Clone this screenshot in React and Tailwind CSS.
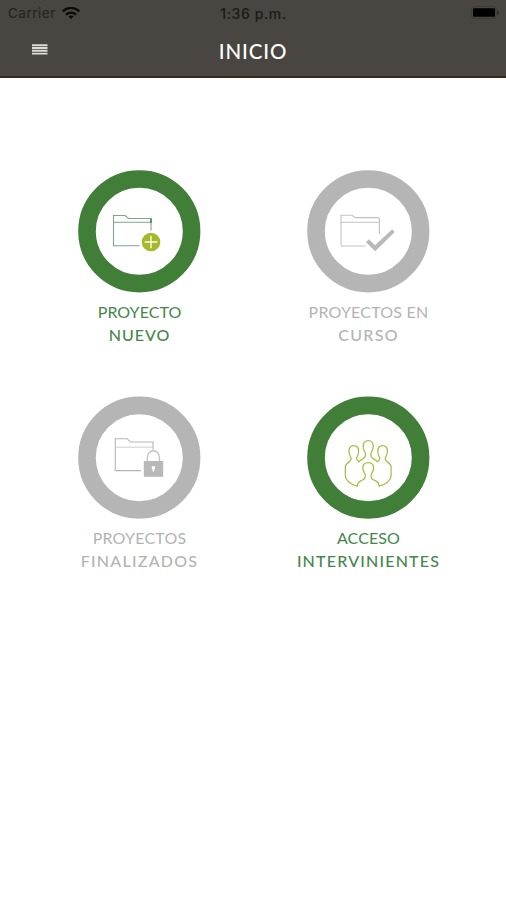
const GREEN = "#417f39";
const GRAY = "#b5b5b5";
const LIME = "#a6b92c";

function Ring({ color, cy = 61.3, children }) {
  return (
    <svg className="block h-[123px] w-[123px]" viewBox="0 0 123 123" fill="none">
      <circle cx="61.3" cy={cy} r="52.3" stroke={color} strokeWidth="17.6" />
      {children}
    </svg>
  );
}

function NewProjectIcon() {
  return (
    <Ring color={GREEN}>
      <path d="M61.5 75.8H35.5V45.5H47L50.5 48.5H73V60.5M35.5 52.3H73" stroke="#7fa58c" strokeWidth="1.1" />
      <path d="M73 48.5V53" stroke={GREEN} strokeWidth="1.4" />
      <circle cx="73" cy="72" r="9.3" fill={LIME} />
      <path d="M66.7 72H79.3M73 65.7V78.3" stroke="#fbfde8" strokeWidth="1.4" />
    </Ring>
  );
}

function OngoingIcon() {
  return (
    <Ring color={GRAY}>
      <path d="M58.5 76H35Q34 76 34 75V45.3H45L48 47.6H71Q72.4 47.6 72.4 49V64M34 52.3H72.4" stroke="#c2c2c2" strokeWidth="1.1" />
      <path d="M61.8 69.2L68 75.3L85.2 59.2L87.8 62L68.2 81.3L59 72.2Z" fill="#b9b9b9" />
    </Ring>
  );
}

function FinishedIcon() {
  return (
    <Ring color={GRAY} cy={61.7}>
      <path d="M63 74.6H37.3V42.7H49.3L52.3 46H75V53.5" stroke="#b5b5b5" strokeWidth="1.1" />
      <path d="M37.3 51.2H75" stroke="#d0d0d0" strokeWidth="1" />
      <path d="M69.3 66V61.5C69.3 52.5 81.4 52.5 81.4 61.5V66" stroke="#c2c2c2" strokeWidth="1.3" />
      <rect x="65.8" y="65" width="19.4" height="15.8" rx="0.6" fill="#b8b8b8" />
      <path d="M73.8 70.3H77V72.8L76.2 73.4V75.5H74.6V73.4L73.8 72.8Z" fill="#fff" />
    </Ring>
  );
}

function PeopleIcon() {
  return (
    <Ring color={GREEN} cy={61.7}>
      <path
        d="M50.3 90.2C45 89 38.3 85 38.3 79V71C38.3 66 44.2 66.8 44.2 62.8C44.2 60.5 42 59.5 42 55.5C42 51.8 43.7 49.7 46.8 49.7C49.9 49.7 51.6 51.8 51.6 55.5C51.6 59.5 49.6 60.5 49.6 62.5C49.6 64.3 50.8 64.6 52 65.8C54 62.8 58.6 63.4 58.6 58.5C58.6 56 56.2 55 56.2 50.6C56.2 46.8 58.1 44.7 61.2 44.7C64.3 44.7 66.2 46.8 66.2 50.6C66.2 55 63.8 56 63.8 58.5C63.8 63.4 68.4 62.8 70.4 65.8C71.6 64.6 72.8 64.3 72.8 62.5C72.8 60.5 70.8 59.5 70.8 55.5C70.8 51.8 72.5 49.7 75.6 49.7C78.7 49.7 80.4 51.8 80.4 55.5C80.4 59.5 78.2 60.5 78.2 62.8C78.2 66.8 84.1 66 84.1 71V79C84.1 85 77.4 89 72.1 90.2C72 86.5 70.5 85.8 68.5 84.8C66.5 83.8 64.3 83.5 64.2 81V78.5C64.2 77 66.6 76 66.6 72.3C66.6 68.6 64.6 66.5 61.2 66.5C57.8 66.5 55.8 68.6 55.8 72.3C55.8 76 58.2 77 58.2 78.5V81C58.1 83.5 55.9 83.8 53.9 84.8C51.9 85.8 50.4 86.5 50.3 90.2Z"
        stroke="#a9bd45"
        strokeWidth="1.25"
        strokeLinejoin="round"
      />
    </Ring>
  );
}

const items = [
  { icon: NewProjectIcon, first: "PROYECTO", second: "NUEVO", color: "text-[#45864a]", a: "tracking-[0.05px]", b: "tracking-[1px]" },
  { icon: OngoingIcon, first: "PROYECTOS EN", second: "CURSO", color: "text-[#b3b3b3]", a: "tracking-[0.2px]", b: "tracking-[1.3px]" },
  { icon: FinishedIcon, first: "PROYECTOS", second: "FINALIZADOS", color: "text-[#b3b3b3]", a: "tracking-[0.2px]", b: "tracking-[1.25px]" },
  { icon: PeopleIcon, first: "ACCESO", second: "INTERVINIENTES", color: "text-[#45864a]", a: "tracking-[0.1px]", b: "tracking-[1.2px]" },
];

function StatusBar() {
  return (
    <div className="grid h-[26px] grid-cols-3 items-center pl-2 pr-[7px] font-['Inter',sans-serif] text-[13px] text-[#1c1a17]">
      <div className="flex items-center gap-[6px]">
        <span className="text-[13.5px] tracking-[0.5px] text-[#25221f]">Carrier</span>
        <svg className="h-[13px] w-[18px]" viewBox="0 0 18 13" fill="none" stroke="#0c0b0a" strokeWidth="2.3">
          <path d="M0.8 4.4C5.5 -0.3 12.5 -0.3 17.2 4.4" />
          <path d="M4 7.6C6.8 4.9 11.2 4.9 14 7.6" />
          <path d="M9 12.1L6.4 9.5C7.9 8.2 10.1 8.2 11.6 9.5Z" fill="#0c0b0a" stroke="none" />
        </svg>
      </div>
      <span className="pt-[1px] text-center text-[14px] font-medium tracking-[0.6px] whitespace-nowrap">1:36 p.m.</span>
      <svg className="h-[14px] w-[28px] justify-self-end" viewBox="0 0 28 14">
        <rect x="0.5" y="0.5" width="24.5" height="12" rx="3" fill="none" stroke="#3f3b36" />
        <rect x="2" y="2.3" width="22" height="8.4" rx="1" fill="#000" />
        <path d="M26.2 4.5V9Q27.7 8 27.7 6.7T26.2 4.5Z" fill="#2b2824" />
      </svg>
    </div>
  );
}

export default function App() {
  return (
    <div className="flex h-[900px] w-[506px] flex-col overflow-hidden bg-white font-['Lato',sans-serif]">
      <header className="h-[78px] shrink-0 border-b-2 border-[#35281a] bg-[#494540]">
        <StatusBar />
        <div className="grid h-[50px] grid-cols-[1fr_auto_1fr] items-center pl-8">
          <svg className="mb-[3px] h-[11px] w-[16px]" viewBox="0 0 16 11" stroke="#dddbd6" strokeWidth="1.9">
            <path d="M0 1.2H15.5M0 4H15.5M0 6.8H15.5M0 9.6H15.5" />
          </svg>
          <h1 className="mr-8 text-[20.5px] font-medium tracking-[0.9px] text-white">INICIO</h1>
        </div>
      </header>
      <main className="grid grid-cols-[229px_229px] auto-rows-[226px] pl-[25px] pt-[92px]">
        {items.map(({ icon: Icon, first, second, color, a, b }) => (
          <button key={first} className={"flex flex-col items-center " + color}>
            <Icon />
            <span className="mt-[7px] flex flex-col items-center text-[16px] leading-[23px] whitespace-nowrap">
              <span className={a}>{first}</span>
              <span className={"font-medium " + b}>{second}</span>
            </span>
          </button>
        ))}
      </main>
    </div>
  );
}
